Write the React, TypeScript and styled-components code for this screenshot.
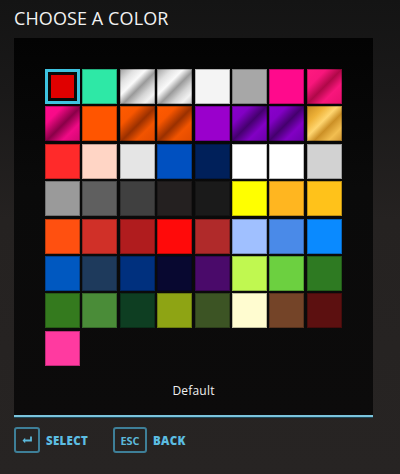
import React, {FC, useState} from 'react';
import styled, {createGlobalStyle} from "styled-components";

//region Data
const silver = 'linear-gradient(135deg, #a0a0a0 0%, #e2e2e2 22%, #fafafa 38%, #9a9a9a 54%, #d4d4d4 70%, #f2f2f2 84%, #c0c0c0 100%)';
const pinkGrad = 'linear-gradient(135deg, #ff1a80 0%, #f8167c 28%, #b00848 50%, #f8167c 70%, #e8106e 100%)';
const magentaGrad = 'linear-gradient(135deg, #ff0a8c 0%, #f80a88 26%, #8a0048 52%, #f00a86 74%, #d00870 100%)';
const orangeGrad = 'linear-gradient(135deg, #ff5a00 0%, #f85600 28%, #9a3000 52%, #f25400 72%, #e04a00 100%)';
const purpleGrad = 'linear-gradient(135deg, #8a00cc 0%, #8200c4 26%, #44006e 50%, #8200c4 72%, #6a00a8 100%)';
const goldGrad = 'linear-gradient(135deg, #c88a20 0%, #eeb238 26%, #ffd670 44%, #cc9026 60%, #f2be50 80%, #d09430 100%)';

const colors: string[] = [
    '#e00000', '#2ee8a6', silver, silver, '#f4f4f4', '#a7a7a7', '#ff0a8c', pinkGrad,
    magentaGrad, '#ff5500', orangeGrad, orangeGrad, '#9a00cc', purpleGrad, purpleGrad, goldGrad,
    '#ff2a2a', '#ffd5c5', '#e5e5e5', '#0050c0', '#00205a', '#ffffff', '#ffffff', '#d2d2d2',
    '#9a9a9a', '#5f5f5f', '#404040', '#242020', '#1a1a1a', '#ffff00', '#ffb620', '#ffc21a',
    '#ff5010', '#d03028', '#b01c1e', '#ff0a0a', '#b02a2a', '#a0c0ff', '#4a8ae8', '#0a8aff',
    '#0058c0', '#1e3a5c', '#00307e', '#080830', '#4a0a6a', '#c0f850', '#6cd040', '#2e7a22',
    '#347a1e', '#4a8c38', '#0e3e22', '#8ea414', '#3c5424', '#fffcd0', '#744428', '#5c1010',
    '#ff3aa0',
];
//endregion

//region Styled
const GlobalStyle = createGlobalStyle`
  html, body {
    margin: 0;
    padding: 0;
  }
  body {
    width: 400px;
    height: 474px;
    overflow: hidden;
    background: linear-gradient(180deg, #141414 0px, #1a1919 90px, #252221 220px, #272423 474px);
    font-family: "Open Sans", "Liberation Sans", sans-serif;
  }
`;

const Screen = styled.div`
  display: flex;
  flex-direction: column;
  padding: 0 27px 0 14px;
  height: 474px;
  box-sizing: border-box;
`;

const Title = styled.h1`
  margin: 0;
  padding-top: 4px;
  height: 34px;
  font-size: 18px;
  font-weight: 400;
  color: #f2f2f2;
  letter-spacing: 0.1px;
  line-height: 28px;
`;

const Panel = styled.section`
  display: flex;
  flex-direction: column;
  align-items: center;
  background: linear-gradient(180deg, #030303 0%, #0a0a0a 40%, #0c0b0b 100%);
  border-bottom: 2px solid #7cc4dc;
  box-shadow: 0 1px 0 #1f4a5a;
  padding: 31px 31px 0;
  height: 379px;
  box-sizing: border-box;
`;

const Grid = styled.div`
  display: grid;
  grid-template-columns: repeat(8, 35px);
  grid-auto-rows: 35px;
  gap: 2.4px;
  align-self: flex-start;
`;

const Swatch = styled.button<{ $bg: string; $active: boolean }>`
  border: none;
  padding: 0;
  margin: 0;
  cursor: pointer;
  background: ${p => p.$bg};
  box-shadow: inset 0 0 0 1px rgba(0, 0, 0, 0.25);
  ${p => p.$active && `
    outline: 3px solid #3ec3e0;
    outline-offset: -3px;
    box-shadow: inset 0 0 0 6px #0a0a0a;
  `}
`;

const Label = styled.div`
  margin-top: auto;
  margin-bottom: 16px;
  color: #f0f0f0;
  font-size: 12px;
  font-weight: 500;
  letter-spacing: 0.2px;
`;

const Footer = styled.footer`
  display: flex;
  align-items: center;
  padding-top: 10px;
`;

const Action = styled.div`
  display: flex;
  align-items: center;
  gap: 6px;
  margin-right: 25px;
`;

const Key = styled.div<{ $wide?: boolean }>`
  display: flex;
  align-items: center;
  justify-content: center;
  box-sizing: border-box;
  height: 26px;
  min-width: ${p => p.$wide ? '34px' : '26px'};
  border: 2px solid #3e7f98;
  border-radius: 3px;
  color: #5cb8da;
  font-size: 11px;
  font-weight: 700;
`;

const ActionText = styled.span`
  color: #5cbde2;
  font-size: 11.5px;
  font-weight: 800;
  letter-spacing: 0.3px;
`;
//endregion

const EnterIcon: FC = () => (
    <svg width="12" height="10" viewBox="0 0 12 10">
        <path d="M10 1.5 V5.5 H3" fill="none" stroke="#5cb8da" strokeWidth="1.8"/>
        <path d="M1.5 5.5 L4.2 2.8 V8.2 Z" fill="#5cb8da"/>
    </svg>
);

const App: FC = () => {
    const [current, setCurrent] = useState(0);

    return (
        <Screen>
            <GlobalStyle/>
            <Title>CHOOSE A COLOR</Title>
            <Panel>
                <Grid>
                    {colors.map((c, index) => (
                        <Swatch
                            key={index}
                            $bg={c}
                            $active={index === current}
                            onClick={() => {setCurrent(index)}}
                        />
                    ))}
                </Grid>
                <Label>Default</Label>
            </Panel>
            <Footer>
                <Action>
                    <Key><EnterIcon/></Key>
                    <ActionText>SELECT</ActionText>
                </Action>
                <Action>
                    <Key $wide>ESC</Key>
                    <ActionText>BACK</ActionText>
                </Action>
            </Footer>
        </Screen>
    );
};

export default App;
